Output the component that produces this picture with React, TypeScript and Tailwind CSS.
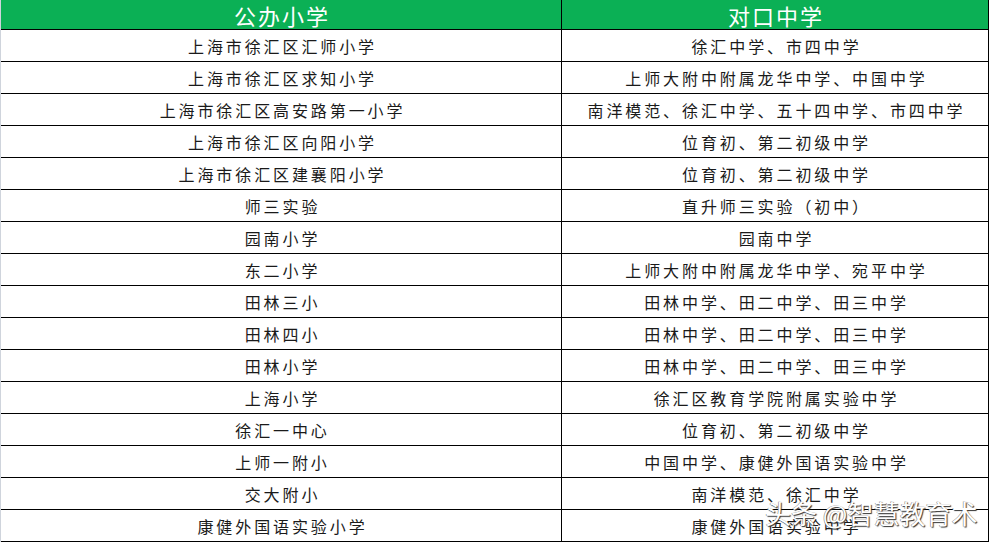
import React from "react";

const rows: [string, string][] = [
  ["上海市徐汇区汇师小学", "徐汇中学、市四中学"],
  ["上海市徐汇区求知小学", "上师大附中附属龙华中学、中国中学"],
  ["上海市徐汇区高安路第一小学", "南洋模范、徐汇中学、五十四中学、市四中学"],
  ["上海市徐汇区向阳小学", "位育初、第二初级中学"],
  ["上海市徐汇区建襄阳小学", "位育初、第二初级中学"],
  ["师三实验", "直升师三实验（初中）"],
  ["园南小学", "园南中学"],
  ["东二小学", "上师大附中附属龙华中学、宛平中学"],
  ["田林三小", "田林中学、田二中学、田三中学"],
  ["田林四小", "田林中学、田二中学、田三中学"],
  ["田林小学", "田林中学、田二中学、田三中学"],
  ["上海小学", "徐汇区教育学院附属实验中学"],
  ["徐汇一中心", "位育初、第二初级中学"],
  ["上师一附小", "中国中学、康健外国语实验中学"],
  ["交大附小", "南洋模范、徐汇中学"],
  ["康健外国语实验小学", "康健外国语实验中学"],
];

export default function App() {
  return (
    <div
      className="relative w-[990px] h-[542px] overflow-hidden bg-white"
      style={{ fontFamily: '"Noto Sans CJK SC", "Noto Sans", sans-serif' }}
    >
      <div className="w-[989px] border-l border-l-[#cfd4dc] border-r border-r-black flex flex-col">
        <div className="grid grid-cols-[561px_1fr] h-[30px] bg-[#0bb055] border-b border-black text-white text-[22px] leading-none tracking-[2px]">
          <div className="flex items-center justify-center border-r border-black pl-[2px]">公办小学</div>
          <div className="flex items-center justify-center pl-[2px]">对口中学</div>
        </div>
        {rows.map(([a, b], i) => (
          <div
            key={i}
            className="grid grid-cols-[561px_1fr] h-[32px] border-b border-black text-[16px] leading-none tracking-[2.9px] text-[#1a1a1a]"
          >
            <div className="flex items-center justify-center border-r border-black pl-[3px]">{a}</div>
            <div className="flex items-center justify-center pl-[3px]">{b}</div>
          </div>
        ))}
      </div>
      <div className="absolute left-[765px] top-[500px] text-[26px] leading-none text-white whitespace-nowrap [text-shadow:1px_1px_1px_#333,-0.5px_-0.5px_0_#777]">
        头条 @智慧教育术
      </div>
    </div>
  );
}
